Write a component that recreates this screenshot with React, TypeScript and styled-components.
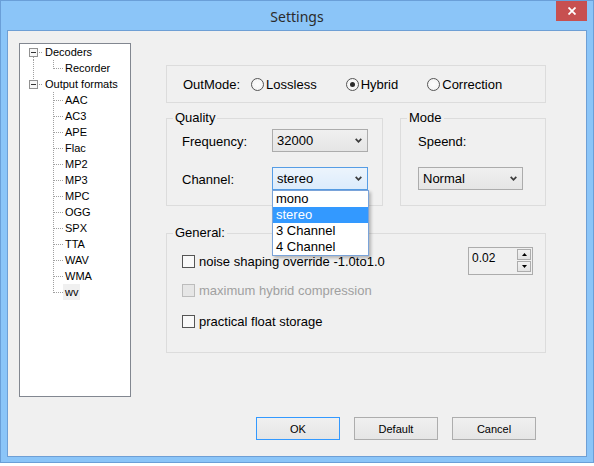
import React from "react";
import styled, { createGlobalStyle } from "styled-components";

const GlobalStyle = createGlobalStyle`
  html, body {
    margin: 0;
    padding: 0;
    background: #fff;
  }
  body {
    font-family: "Liberation Sans", Arial, sans-serif;
    font-size: 13px;
    color: #000;
  }
`;

const Window = styled.div`
  box-sizing: border-box;
  width: 594px;
  height: 463px;
  border: 1px solid #6a9fd8;
  background: #8bc5f8;
  display: flex;
  flex-direction: column;
`;

const TitleBar = styled.div`
  height: 29px;
  display: grid;
  grid-template-columns: 1fr auto 1fr;
`;

const Title = styled.div`
  grid-column: 2;
  font-family: "Noto Sans", "Open Sans", sans-serif;
  font-size: 14px;
  line-height: 31px;
  color: #2b2b2b;
`;

const CloseButton = styled.div`
  grid-column: 3;
  justify-self: end;
  align-self: start;
  width: 31px;
  height: 20px;
  margin-right: 6px;
  background: #c75050;
  display: flex;
  align-items: center;
  justify-content: center;
`;

const Client = styled.div`
  flex: 1;
  margin: 0 6px 5px 6px;
  border: 1px solid #6e9fd5;
  background: #f0f0f0;
  display: flex;
  flex-direction: column;
`;

const TopRow = styled.div`
  display: flex;
  padding: 12px 0 0 11px;
`;

/* ---------- tree ---------- */

const TreeBox = styled.div`
  box-sizing: border-box;
  width: 112px;
  height: 354px;
  border: 1px solid #828790;
  background: #fff;
  padding-left: 3px;
  font-size: 11px;
`;

const TreeRow = styled.div`
  display: flex;
  height: 16px;
`;

const TreeLabel = styled.span<{ $selected?: boolean }>`
  padding: 0 2px;
  line-height: 16px;
  white-space: nowrap;
  background: ${(p) => (p.$selected ? "#f0f0f0" : "transparent")};
`;

type GuideKind = "none" | "line" | "tee" | "elbow" | "openDown" | "openUp";

const dots = { stroke: "#a0a0a0", strokeWidth: 1, strokeDasharray: "1 1" };

function Guide({ kind }: { kind: GuideKind }) {
  const open = kind === "openDown" || kind === "openUp";
  return (
    <svg width="20" height="16" shapeRendering="crispEdges">
      {(kind === "line" || kind === "tee") && <line x1="10.5" y1="0" x2="10.5" y2="16" {...dots} />}
      {kind === "elbow" && <line x1="10.5" y1="0" x2="10.5" y2="9" {...dots} />}
      {(kind === "tee" || kind === "elbow") && <line x1="11" y1="8.5" x2="20" y2="8.5" {...dots} />}
      {kind === "openDown" && <line x1="10.5" y1="13" x2="10.5" y2="16" {...dots} />}
      {kind === "openUp" && <line x1="10.5" y1="0" x2="10.5" y2="4" {...dots} />}
      {open && (
        <>
          <line x1="16" y1="8.5" x2="20" y2="8.5" {...dots} />
          <rect x="6.5" y="4.5" width="8" height="8" fill="#f7f7f7" stroke="#919191" />
          <line x1="8" y1="8.5" x2="13" y2="8.5" stroke="#333" />
        </>
      )}
    </svg>
  );
}

const formats = ["AAC", "AC3", "APE", "Flac", "MP2", "MP3", "MPC", "OGG", "SPX", "TTA", "WAV", "WMA", "wv"];

/* ---------- right side ---------- */

const RightPanel = styled.div`
  display: flex;
  flex-direction: column;
  width: 380px;
  margin: 22px 0 0 35px;
`;

const Group = styled.div<{ $w?: number; $h: number }>`
  position: relative;
  box-sizing: border-box;
  width: ${(p) => (p.$w ? `${p.$w}px` : "100%")};
  height: ${(p) => p.$h}px;
  border: 1px solid #dcdcdc;
`;

const Legend = styled.span`
  position: absolute;
  top: -9px;
  left: 6px;
  padding: 0 2px;
  background: #f0f0f0;
  line-height: 16px;
`;

const OutModeGroup = styled(Group)`
  display: flex;
  align-items: center;
  padding-left: 16px;
`;

const OutModeLabel = styled.span`
  margin-right: 11px;
`;

const RadioOption = styled.label`
  display: flex;
  align-items: center;
  gap: 2px;
  & + & {
    margin-left: 29px;
  }
`;

const RadioCircle = styled.span<{ $checked?: boolean }>`
  box-sizing: border-box;
  width: 13px;
  height: 13px;
  border-radius: 50%;
  border: 1px solid #555;
  background: radial-gradient(circle, #fdfdfd 0%, #f0f0f0 100%);
  display: flex;
  align-items: center;
  justify-content: center;
  &::after {
    content: "";
    display: ${(p) => (p.$checked ? "block" : "none")};
    width: 5px;
    height: 5px;
    border-radius: 50%;
    background: #2a2a2a;
  }
`;

const GroupRow = styled.div`
  display: flex;
  gap: 17px;
  margin-top: 15px;
`;

const FormGroup = styled(Group)<{ $cols: string; $left: number }>`
  display: grid;
  grid-template-columns: ${(p) => p.$cols};
  grid-auto-rows: 23px;
  row-gap: 15px;
  align-items: center;
  align-content: start;
  padding: 10px 0 0 ${(p) => p.$left}px;
`;

const FieldLabel = styled.span`
  padding-top: 2px;
`;

const Combo = styled.div<{ $focused?: boolean }>`
  position: relative;
  box-sizing: border-box;
  height: 23px;
  border: 1px solid ${(p) => (p.$focused ? "#569de5" : "#acacac")};
  background: ${(p) =>
    p.$focused ? "linear-gradient(#ecf4fc, #dcecfc)" : "linear-gradient(#f0f0f0, #e5e5e5)"};
  display: flex;
  align-items: center;
  justify-content: space-between;
  padding: 0 5px 0 4px;
`;

const DropList = styled.div`
  position: absolute;
  top: calc(100% + 1px);
  left: -1px;
  z-index: 5;
  box-sizing: border-box;
  width: 97px;
  border: 1px solid #7aa3d9;
  background: #fff;
  box-shadow: 2px 2px 3px rgba(0, 0, 0, 0.25);
`;

const DropItem = styled.div<{ $active?: boolean }>`
  height: 16px;
  line-height: 16px;
  padding-left: 3px;
  background: ${(p) => (p.$active ? "#3399ff" : "transparent")};
  color: ${(p) => (p.$active ? "#fff" : "#000")};
`;

function Chevron() {
  return (
    <svg width="7" height="5" viewBox="0 0 7 5">
      <path d="M0.7 0.8 L3.5 3.8 L6.3 0.8" fill="none" stroke="#3c3c3c" strokeWidth="1.7" />
    </svg>
  );
}

const GeneralGroup = styled(Group)`
  margin-top: 27px;
  display: grid;
  grid-template-columns: 1fr auto;
  grid-template-rows: 28px 31px 31px;
  padding: 13px 12px 0 15px;
`;

const CheckRow = styled.label<{ $disabled?: boolean }>`
  grid-column: 1;
  display: flex;
  align-items: center;
  gap: 4px;
  color: ${(p) => (p.$disabled ? "#a0a0a0" : "#000")};
`;

const CheckBox = styled.span<{ $disabled?: boolean }>`
  box-sizing: border-box;
  width: 13px;
  height: 13px;
  border: 1px solid ${(p) => (p.$disabled ? "#bcbcbc" : "#555")};
  background: ${(p) => (p.$disabled ? "#e6e6e6" : "#f9f9f9")};
`;

const Spin = styled.div`
  grid-column: 2;
  grid-row: 1;
  box-sizing: border-box;
  width: 65px;
  height: 28px;
  border: 1px solid #acacac;
  display: flex;
  justify-content: space-between;
`;

const SpinText = styled.span`
  font-size: 12px;
  line-height: 14px;
  padding: 3px 0 0 3px;
`;

const SpinButtons = styled.div`
  display: flex;
  flex-direction: column;
  gap: 1px;
  padding: 1px 1px 0 0;
`;

const SpinButton = styled.div`
  box-sizing: border-box;
  width: 14px;
  height: 11px;
  border: 1px solid #acacac;
  background: linear-gradient(#f2f2f2, #e3e3e3);
  display: flex;
  align-items: center;
  justify-content: center;
`;

/* ---------- buttons ---------- */

const ButtonRow = styled.div`
  margin-top: auto;
  display: flex;
  justify-content: flex-end;
  gap: 14px;
  padding: 0 50px 16px 0;
`;

const DialogButton = styled.button<{ $default?: boolean }>`
  box-sizing: border-box;
  width: 84px;
  height: 23px;
  padding: 0;
  border: 1px solid ${(p) => (p.$default ? "#3399ff" : "#adadad")};
  background: linear-gradient(#f0f0f0, #e5e5e5);
  font-family: "Liberation Sans", Arial, sans-serif;
  font-size: 11px;
  color: #000;
`;

export default function App() {
  return (
    <>
      <GlobalStyle />
      <Window>
        <TitleBar>
          <Title>Settings</Title>
          <CloseButton>
            <svg width="8" height="8" viewBox="0 0 8 8">
              <path d="M0.5 0.5 L7.5 7.5 M7.5 0.5 L0.5 7.5" stroke="#fff" strokeWidth="1.8" />
            </svg>
          </CloseButton>
        </TitleBar>
        <Client>
          <TopRow>
            <TreeBox>
              <TreeRow>
                <Guide kind="openDown" />
                <TreeLabel>Decoders</TreeLabel>
              </TreeRow>
              <TreeRow>
                <Guide kind="line" />
                <Guide kind="elbow" />
                <TreeLabel>Recorder</TreeLabel>
              </TreeRow>
              <TreeRow>
                <Guide kind="openUp" />
                <TreeLabel>Output formats</TreeLabel>
              </TreeRow>
              {formats.map((f, i) => (
                <TreeRow key={f}>
                  <Guide kind="none" />
                  <Guide kind={i === formats.length - 1 ? "elbow" : "tee"} />
                  <TreeLabel $selected={f === "wv"}>{f}</TreeLabel>
                </TreeRow>
              ))}
            </TreeBox>

            <RightPanel>
              <OutModeGroup $h={38}>
                <OutModeLabel>OutMode:</OutModeLabel>
                <RadioOption>
                  <RadioCircle />
                  Lossless
                </RadioOption>
                <RadioOption>
                  <RadioCircle $checked />
                  Hybrid
                </RadioOption>
                <RadioOption>
                  <RadioCircle />
                  Correction
                </RadioOption>
              </OutModeGroup>

              <GroupRow>
                <FormGroup $w={217} $h={88} $cols="90px 96px" $left={15}>
                  <Legend>Quality</Legend>
                  <FieldLabel>Frequency:</FieldLabel>
                  <Combo>
                    32000
                    <Chevron />
                  </Combo>
                  <FieldLabel>Channel:</FieldLabel>
                  <Combo $focused>
                    stereo
                    <Chevron />
                    <DropList>
                      <DropItem>mono</DropItem>
                      <DropItem $active>stereo</DropItem>
                      <DropItem>3 Channel</DropItem>
                      <DropItem>4 Channel</DropItem>
                    </DropList>
                  </Combo>
                </FormGroup>
                <FormGroup $w={146} $h={88} $cols="105px" $left={17}>
                  <Legend>Mode</Legend>
                  <FieldLabel>Speend:</FieldLabel>
                  <Combo>
                    Normal
                    <Chevron />
                  </Combo>
                </FormGroup>
              </GroupRow>

              <GeneralGroup $h={120}>
                <Legend>General:</Legend>
                <CheckRow>
                  <CheckBox />
                  noise shaping override -1.0to1.0
                </CheckRow>
                <Spin>
                  <SpinText>0.02</SpinText>
                  <SpinButtons>
                    <SpinButton>
                      <svg width="5" height="3" viewBox="0 0 5 3">
                        <path d="M0 3 L2.5 0 L5 3 Z" fill="#000" />
                      </svg>
                    </SpinButton>
                    <SpinButton>
                      <svg width="5" height="3" viewBox="0 0 5 3">
                        <path d="M0 0 L5 0 L2.5 3 Z" fill="#000" />
                      </svg>
                    </SpinButton>
                  </SpinButtons>
                </Spin>
                <CheckRow $disabled>
                  <CheckBox $disabled />
                  maximum hybrid compression
                </CheckRow>
                <CheckRow>
                  <CheckBox />
                  practical float storage
                </CheckRow>
              </GeneralGroup>
            </RightPanel>
          </TopRow>

          <ButtonRow>
            <DialogButton $default>OK</DialogButton>
            <DialogButton>Default</DialogButton>
            <DialogButton>Cancel</DialogButton>
          </ButtonRow>
        </Client>
      </Window>
    </>
  );
}
